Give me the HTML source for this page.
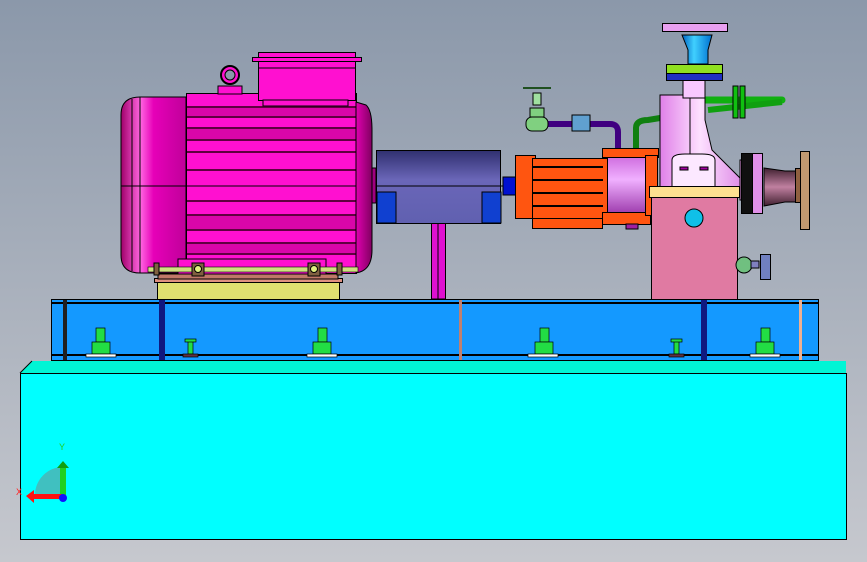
<!DOCTYPE html>
<html><head><meta charset="utf-8"><style>
html,body{margin:0;padding:0;width:867px;height:562px;overflow:hidden}
svg{display:block}
</style></head><body>
<svg width="867" height="562" viewBox="0 0 867 562" xmlns="http://www.w3.org/2000/svg" stroke="#000" stroke-width="1">
<defs>
<linearGradient id="bg" x1="0" y1="0" x2="0" y2="1"><stop offset="0" stop-color="#8b98aa"/><stop offset="1" stop-color="#c6c8ce"/></linearGradient>
<linearGradient id="cap" x1="0" y1="0" x2="1" y2="0"><stop offset="0" stop-color="#a0006a"/><stop offset="0.3" stop-color="#ff66e0"/><stop offset="0.5" stop-color="#e600b8"/><stop offset="1" stop-color="#c0009a"/></linearGradient>
<linearGradient id="fl" x1="0" y1="0" x2="1" y2="0"><stop offset="0" stop-color="#e000b0"/><stop offset="1" stop-color="#800060"/></linearGradient>
<linearGradient id="gd" x1="0" y1="0" x2="0" y2="1"><stop offset="0" stop-color="#303070"/><stop offset="0.4" stop-color="#6a66b8"/><stop offset="1" stop-color="#6060b0"/></linearGradient>
<linearGradient id="pu" x1="0" y1="0" x2="0" y2="1"><stop offset="0" stop-color="#d070e0"/><stop offset="0.4" stop-color="#f0b0ff"/><stop offset="1" stop-color="#a040b0"/></linearGradient>
<linearGradient id="cs" x1="0" y1="0" x2="1" y2="0"><stop offset="0" stop-color="#e080e8"/><stop offset="0.5" stop-color="#fde0ff"/><stop offset="1" stop-color="#e090e8"/></linearGradient>
<linearGradient id="nz" x1="0" y1="0" x2="1" y2="0"><stop offset="0" stop-color="#0060c0"/><stop offset="0.4" stop-color="#40d0ff"/><stop offset="1" stop-color="#0070d0"/></linearGradient>
<linearGradient id="rd" x1="0" y1="0" x2="0" y2="1"><stop offset="0" stop-color="#402030"/><stop offset="0.5" stop-color="#c080a0"/><stop offset="1" stop-color="#402030"/></linearGradient>
</defs>
<rect width="867" height="562" fill="url(#bg)" stroke="none"/>
<!-- concrete block -->
<polygon points="32,361 846,361 846,373 20,373" fill="#00f5d5" stroke="none"/>
<line x1="20" y1="373" x2="32" y2="361"/>
<rect x="20.5" y="373.5" width="826" height="166" fill="#00ffff"/>
<!-- base frame -->
<rect x="51.5" y="299.5" width="767" height="61" fill="#1499ff"/>
<line x1="51" y1="303" x2="818" y2="303" stroke-width="2"/>
<line x1="51" y1="355" x2="818" y2="355" stroke-width="2"/>
<rect x="63" y="300" width="4" height="60" fill="#202020" stroke="none"/>
<rect x="159" y="300" width="6" height="60" fill="#101880" stroke="none"/>
<rect x="459" y="300" width="3" height="60" fill="#c08070" stroke="none"/>
<rect x="701" y="300" width="6" height="60" fill="#101880" stroke="none"/>
<rect x="799" y="300" width="3" height="60" fill="#f0b090" stroke="none"/>
<!-- bolts -->
<g fill="#22dd44" stroke="#000" stroke-width="0.7">
<rect x="96" y="328" width="9" height="14"/><rect x="92" y="342" width="18" height="12"/><rect x="86" y="354" width="30" height="3" fill="#fff"/>
<rect x="318" y="328" width="9" height="14"/><rect x="313" y="342" width="18" height="12"/><rect x="307" y="354" width="30" height="3" fill="#fff"/>
<rect x="540" y="328" width="9" height="14"/><rect x="535" y="342" width="18" height="12"/><rect x="528" y="354" width="30" height="3" fill="#fff"/>
<rect x="761" y="328" width="9" height="14"/><rect x="756" y="342" width="18" height="12"/><rect x="750" y="354" width="30" height="3" fill="#fff"/>
<rect x="188" y="340" width="5" height="14"/><rect x="185" y="339" width="11" height="3"/><rect x="183" y="354" width="15" height="3" fill="#603040"/>
<rect x="674" y="340" width="5" height="14"/><rect x="671" y="339" width="11" height="3"/><rect x="669" y="354" width="15" height="3" fill="#603040"/>
</g>
<!-- motor plinth -->
<rect x="157.5" y="282.5" width="182" height="17" fill="#e0e070"/>
<rect x="154.5" y="278.5" width="188" height="4" fill="#e09080"/>
<rect x="158" y="274" width="180" height="5" fill="#c07868"/>
<!-- motor -->
<path d="M140,97 L186,97 L186,273 L140,273 Q121,273 121,255 L121,115 Q121,97 140,97Z" fill="url(#cap)"/>
<line x1="132" y1="99" x2="132" y2="271"/><line x1="140" y1="97" x2="140" y2="273"/>
<rect x="186.5" y="93.5" width="170" height="180" fill="#ff10d0"/>
<g stroke="#600040" stroke-width="2">
<line x1="187" y1="107" x2="356" y2="107"/><line x1="187" y1="117" x2="356" y2="117"/><line x1="187" y1="128" x2="356" y2="128"/><line x1="187" y1="140" x2="356" y2="140"/><line x1="187" y1="152" x2="356" y2="152"/><line x1="187" y1="170" x2="356" y2="170"/><line x1="187" y1="201" x2="356" y2="201"/><line x1="187" y1="215" x2="356" y2="215"/><line x1="187" y1="230" x2="356" y2="230"/><line x1="187" y1="243" x2="356" y2="243"/><line x1="187" y1="254" x2="356" y2="254"/>
</g>
<g fill="#c00090" stroke="none" opacity="0.6">
<rect x="187" y="108" width="169" height="8"/><rect x="187" y="129" width="169" height="10"/><rect x="187" y="216" width="169" height="13"/><rect x="187" y="244" width="169" height="9"/>
</g>
<line x1="121" y1="186" x2="372" y2="186"/>
<path d="M356,102 L366,105 Q372,110 372,130 L372,250 Q372,268 360,272 L356,273Z" fill="url(#fl)"/>
<rect x="372" y="168" width="4" height="35" fill="#a00080"/>
<rect x="258.5" y="52.5" width="97" height="48" fill="#ff10d0"/>
<rect x="252.5" y="57.5" width="109" height="4" fill="#ff10d0"/>
<line x1="258" y1="68" x2="356" y2="68"/>
<rect x="263" y="100" width="85" height="6" fill="#ff10d0"/>
<circle cx="230" cy="75" r="9" fill="#ff10d0" stroke-width="2"/><circle cx="230" cy="75" r="5" fill="#8b98aa"/>
<rect x="218" y="86" width="24" height="8" fill="#ff10d0"/>
<rect x="178" y="259" width="148" height="15" fill="#ff10d0"/>
<rect x="148" y="267" width="210" height="5" fill="#d0e080" stroke-width="0.6"/>
<rect x="154" y="263" width="5" height="12" fill="#806040"/><rect x="337" y="263" width="5" height="12" fill="#806040"/>
<rect x="192" y="263" width="12" height="13" fill="#806040"/><circle cx="198" cy="269" r="3.5" fill="#e0f080"/>
<rect x="308" y="263" width="12" height="13" fill="#806040"/><circle cx="314" cy="269" r="3.5" fill="#e0f080"/>
<!-- support post -->
<rect x="431.5" y="223" width="14" height="76" fill="#e010d0"/>
<line x1="438" y1="223" x2="438" y2="299"/>
<!-- coupling guard -->
<rect x="376.5" y="150.5" width="124" height="73" fill="url(#gd)"/>
<rect x="377" y="192" width="19" height="31" fill="#1040d0"/><rect x="482" y="192" width="19" height="31" fill="#1040d0"/>
<line x1="376" y1="186" x2="515" y2="186"/>
<rect x="503" y="177" width="13" height="18" fill="#0010d0"/>
<!-- orange bearing housing -->
<rect x="515.5" y="155.5" width="20" height="63" fill="#ff5510"/>
<rect x="532.5" y="158.5" width="78" height="60" fill="#ff5510"/>
<rect x="532.5" y="218.5" width="70" height="10" fill="#ff5510"/>
<g stroke-width="2"><line x1="533" y1="167" x2="603" y2="167"/><line x1="533" y1="180" x2="603" y2="180"/><line x1="533" y1="193" x2="603" y2="193"/><line x1="533" y1="206" x2="603" y2="206"/></g>
<rect x="607.5" y="157.5" width="38" height="55" fill="url(#pu)"/>
<rect x="602.5" y="148.5" width="56" height="9" fill="#ff5510"/>
<rect x="602.5" y="212.5" width="48" height="12" fill="#ff5510"/>
<rect x="645.5" y="155.5" width="12" height="60" fill="#ff5510"/>
<rect x="626" y="224" width="12" height="5" fill="#a020a0"/>
<!-- piping -->
<path d="M548,124 L610,124 Q618,124 618,132 L618,148" fill="none" stroke="#400080" stroke-width="6"/>
<rect x="572" y="115" width="18" height="16" fill="#60a0d0"/>
<path d="M636,148 L636,128 Q636,120 648,120 L660,118" fill="none" stroke="#108010" stroke-width="6"/>
<rect x="526" y="117" width="22" height="14" rx="6" fill="#80d080"/>
<rect x="530" y="108" width="14" height="9" fill="#80d080"/>
<rect x="533" y="93" width="8" height="12" fill="#a0e0a0"/>
<line x1="523" y1="88" x2="551" y2="88" stroke="#205020" stroke-width="2"/>
<!-- casing -->
<path d="M705,100 L782,100" stroke="#10b010" stroke-width="7" stroke-linecap="round"/>
<path d="M708,110 L782,102" stroke="#10a010" stroke-width="6"/>
<rect x="733" y="86" width="5" height="32" fill="#10c010"/>
<rect x="740" y="86" width="5" height="32" fill="#10c010"/>
<path d="M660,95 L705,95 L705,120 L712,150 L740,178 L740,190 L660,190Z" fill="url(#cs)"/>
<line x1="690" y1="95" x2="690" y2="154"/>
<rect x="683" y="80" width="22" height="18" fill="#f8c8ff"/>
<rect x="666.5" y="64.5" width="56" height="9" fill="#90e020"/>
<rect x="666.5" y="73.5" width="56" height="7" fill="#2030c0"/>
<path d="M682,35 L712,35 L708,50 L708,64 L688,64 L688,50Z" fill="url(#nz)"/>
<rect x="662.5" y="23.5" width="65" height="8" fill="#e8a0f0"/>
<path d="M672,173 L672,160 Q672,154 685,154 L702,154 Q715,154 715,160 L715,187 L672,187Z" fill="#fce8ff"/>
<rect x="680" y="167" width="8" height="3" fill="#a000a0"/><rect x="700" y="167" width="8" height="3" fill="#a000a0"/>
<!-- right suction -->
<rect x="740" y="160" width="14" height="40" fill="#f0a0f0"/>
<rect x="741.5" y="153.5" width="11" height="60" fill="#101010"/>
<rect x="752.5" y="153.5" width="10" height="60" fill="#e090e8"/>
<path d="M764,168 L785,171 L796,171 L796,202 L785,202 L764,206Z" fill="url(#rd)"/>
<rect x="795.5" y="168.5" width="6" height="34" fill="#906040"/>
<rect x="800.5" y="151.5" width="9" height="78" fill="#c09870"/>
<!-- pedestal -->
<rect x="651.5" y="197.5" width="86" height="102" fill="#e07aa2"/>
<rect x="649.5" y="186.5" width="90" height="11" fill="#fde090"/>
<circle cx="694" cy="218" r="9" fill="#10c0e8"/>
<!-- drain valve -->
<circle cx="744" cy="265" r="8" fill="#70c080"/>
<rect x="751" y="261" width="8" height="7" fill="#8080c0"/>
<rect x="760.5" y="254.5" width="10" height="25" fill="#7080c0"/>
<!-- triad -->
<path d="M35,495 A28,28 0 0 1 63,467 L63,495Z" fill="#40c0c0" stroke="none"/>
<rect x="60" y="468" width="6" height="29" fill="#20d020" stroke="none"/>
<polygon points="57,468 63,461 69,468" fill="#10a010" stroke="none"/>
<rect x="34" y="494" width="28" height="5" fill="#ff1010" stroke="none"/>
<polygon points="34,490 26,496 34,503" fill="#ff1010" stroke="none"/>
<circle cx="63" cy="498" r="4" fill="#1010ff" stroke="none"/>
<text x="59" y="450" font-family="Liberation Sans, sans-serif" font-size="9" fill="#20d020" stroke="none">Y</text>
<text x="16" y="495" font-family="Liberation Sans, sans-serif" font-size="9" fill="#ff2020" stroke="none">X</text>
</svg>
</body></html>
